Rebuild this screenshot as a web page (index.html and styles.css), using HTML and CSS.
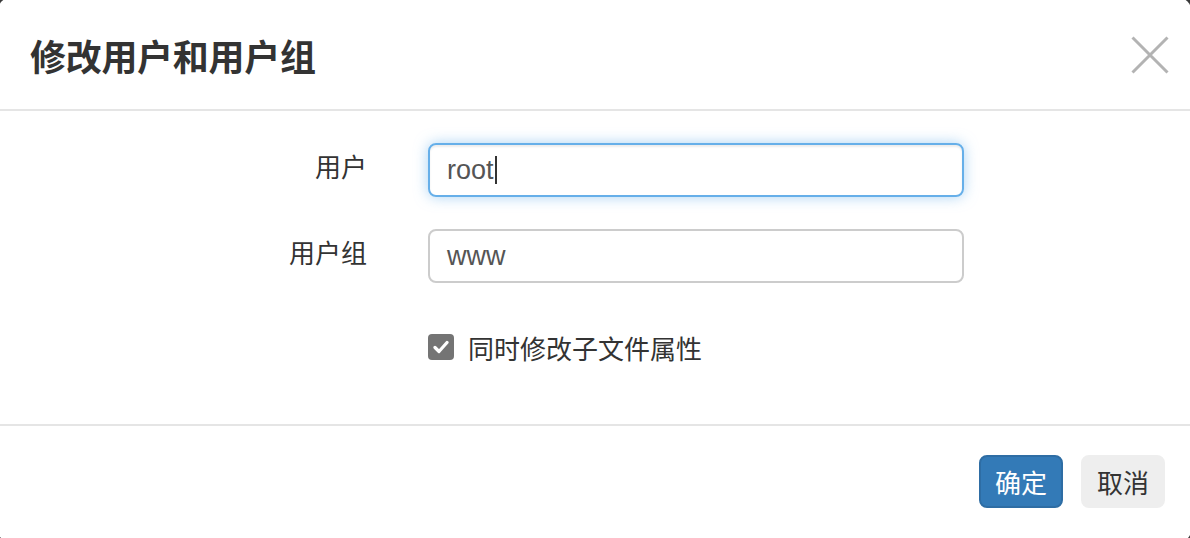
FILE: index.html
```html
<!DOCTYPE html>
<html lang="zh">
<head>
<meta charset="utf-8">
<title>修改用户和用户组</title>
<link rel="stylesheet" href="styles.css">
</head>
<body>
<div class="modal">
  <div class="modal-header">
    <h4 class="modal-title">修改用户和用户组</h4>
    <button class="close" type="button" aria-label="关闭">
      <svg width="38" height="38" viewBox="0 0 38 38"><path d="M1.5 1.5 L36.5 36.5 M36.5 1.5 L1.5 36.5" stroke="#b3b3b3" stroke-width="3" fill="none"/></svg>
    </button>
  </div>
  <div class="modal-body">
    <div class="form-grid">
      <label class="form-label">用户</label>
      <div class="form-input focused"><span class="val">root</span><span class="caret"></span></div>
      <label class="form-label">用户组</label>
      <div class="form-input"><span class="val">www</span></div>
    </div>
    <div class="check-row">
      <span class="checkbox"><svg width="16" height="14" viewBox="0 0 16 14"><path d="M2 7.5 L6 11.5 L14 2.5" stroke="#fff" stroke-width="3.2" fill="none" stroke-linecap="round" stroke-linejoin="round"/></svg></span>
      <span class="check-label">同时修改子文件属性</span>
    </div>
  </div>
  <div class="modal-footer">
    <button class="btn btn-primary" type="button">确定</button>
    <button class="btn btn-default" type="button">取消</button>
  </div>
</div>
</body>
</html>
```
FILE: styles.css
```css
html, body {
  margin: 0;
  padding: 0;
  height: 100%;
  overflow: hidden;
}
body {
  background: #3a3a3a;
  font-family: "Liberation Sans", "Noto Sans CJK SC", sans-serif;
  color: #333;
}
.modal {
  margin: -2px -1px 0 -2px;
  height: 544px;
  background: #fff;
  border-radius: 12px;
  display: flex;
  flex-direction: column;
}
.modal-header {
  box-sizing: border-box;
  height: 113px;
  padding: 3px 22px 0 32px;
  border-bottom: 2px solid #e5e5e5;
  display: flex;
  align-items: center;
  justify-content: space-between;
}
.modal-title {
  margin: 0;
  font-size: 36px;
  font-weight: 600;
  color: #333;
  letter-spacing: -0.3px;
}
.close {
  border: 0;
  background: none;
  padding: 0;
  width: 38px;
  height: 38px;
  display: block;
}
.close svg { display: block; }
.modal-body {
  box-sizing: border-box;
  height: 315px;
  padding-top: 32px;
  border-bottom: 2px solid #e5e5e5;
}
.form-grid {
  display: grid;
  grid-template-columns: 369px 536px;
  grid-auto-rows: 54px;
  column-gap: 61px;
  row-gap: 32px;
  align-items: center;
}
.form-label {
  text-align: right;
  font-size: 26px;
  line-height: 30px;
  padding-bottom: 4px;
  color: #333;
}
.form-input {
  box-sizing: border-box;
  height: 54px;
  border: 2px solid #ccc;
  border-radius: 8px;
  padding: 0 17px;
  display: flex;
  align-items: center;
  font-size: 27px;
  color: #555;
}
.form-input.focused {
  border-color: #66afe9;
  box-shadow: inset 0 2px 2px rgba(0,0,0,.075), 0 0 14px rgba(102,175,233,.55);
}
.caret {
  display: inline-block;
  width: 2px;
  height: 28px;
  background: #333;
  margin-left: 1px;
}
.check-row {
  display: flex;
  align-items: center;
  margin: 50px 0 0 430px;
  height: 28px;
}
.checkbox {
  box-sizing: border-box;
  width: 26px;
  height: 26px;
  border-radius: 4px;
  background: #747474;
  display: flex;
  align-items: center;
  justify-content: center;
}
.check-label {
  margin-left: 14px;
  font-size: 26px;
  color: #333;
}
.modal-footer {
  display: flex;
  justify-content: flex-end;
  gap: 18px;
  padding: 29px 26px 0 0;
}
.btn {
  box-sizing: border-box;
  width: 84px;
  height: 53px;
  border-radius: 8px;
  font-family: "Liberation Sans", "Noto Sans CJK SC", sans-serif;
  font-size: 26px;
  padding: 0;
}
.btn-primary {
  background: #337ab7;
  border: 2px solid #2e6da4;
  color: #fff;
}
.btn-default {
  background: #eee;
  border: 2px solid #eee;
  color: #333;
}
```
